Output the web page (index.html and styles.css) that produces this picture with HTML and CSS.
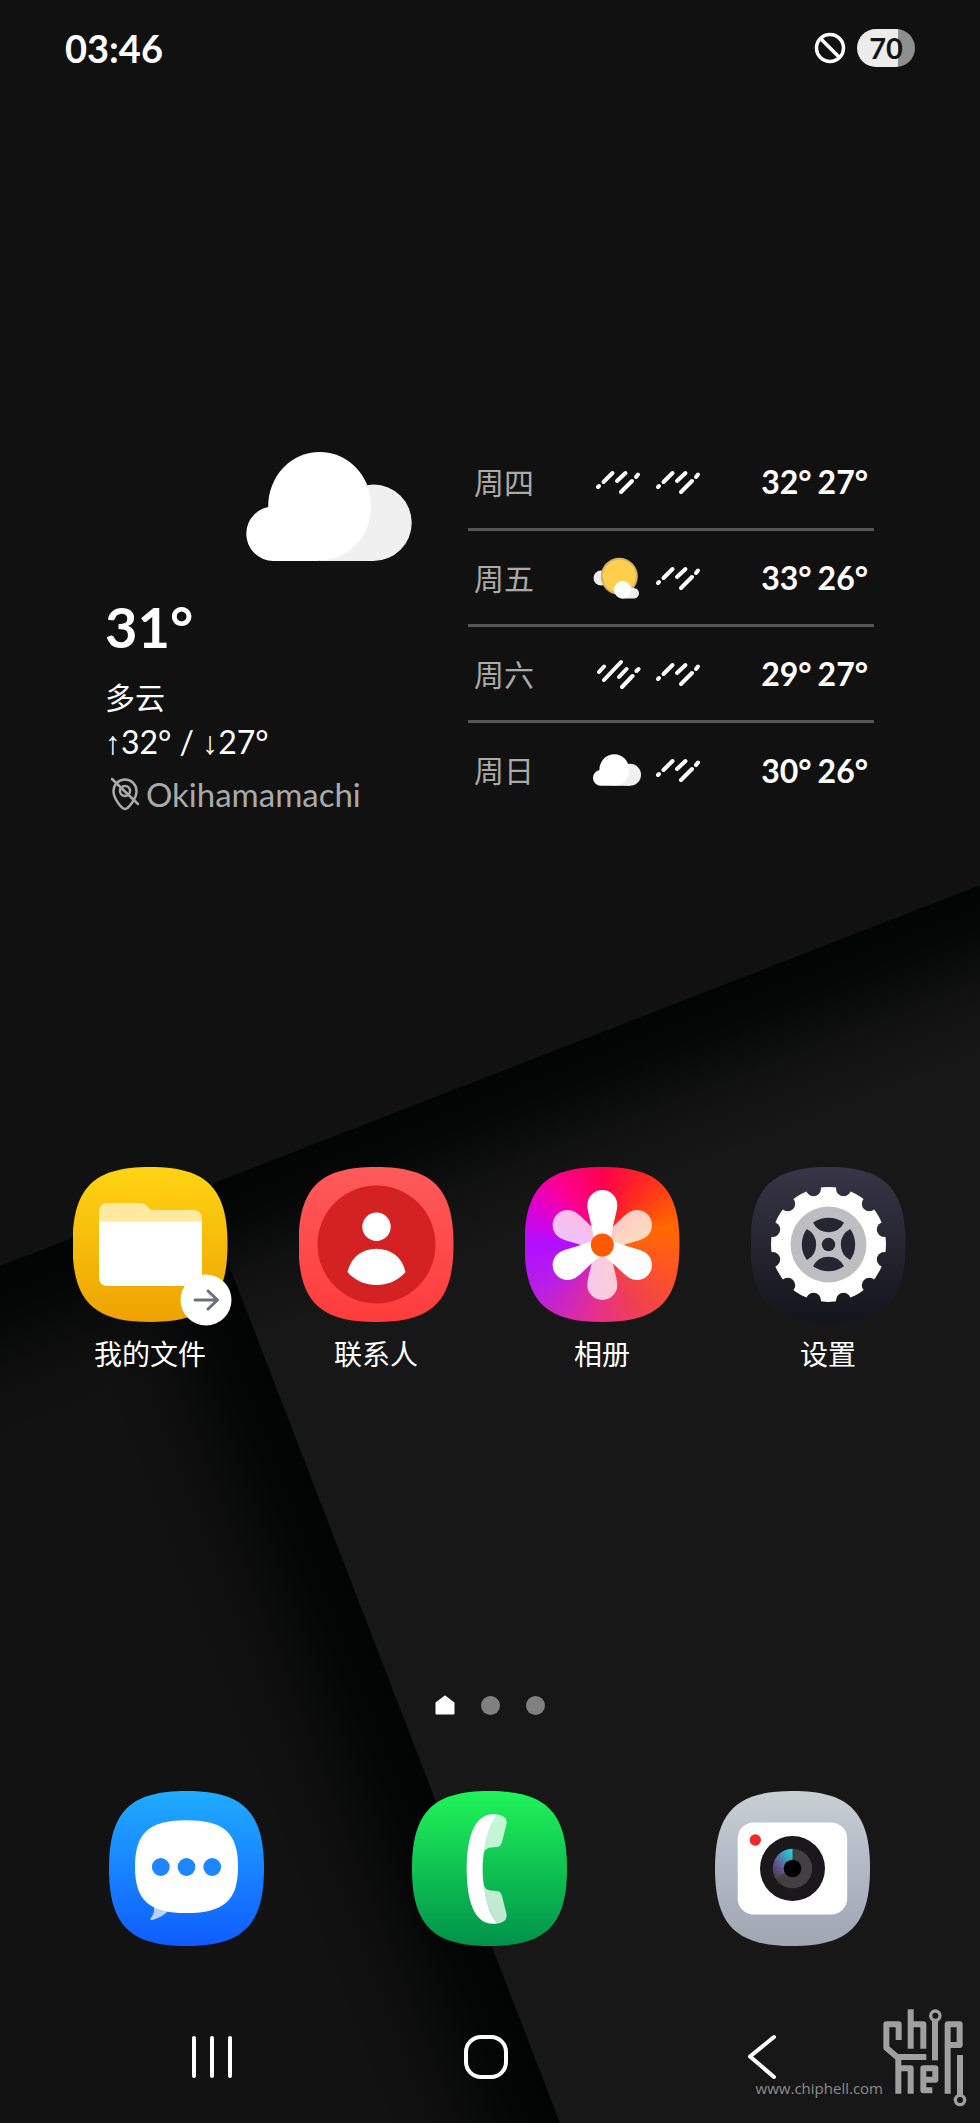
FILE: index.html
```html
<!DOCTYPE html>
<html lang="zh-CN">
<head>
    <meta charset="UTF-8">
    <meta name="viewport" content="width=device-width, initial-scale=1.0">
    <title>主屏幕</title>
    <link rel="stylesheet" href="styles.css">
</head>
<body>
    <!-- wallpaper -->
    <svg class="wallpaper" viewBox="0 0 980 2123" preserveAspectRatio="xMidYMid slice" aria-hidden="true">
        <defs>
            <linearGradient id="shadeTop" gradientUnits="userSpaceOnUse" x1="0" y1="1266" x2="58" y2="1415">
                <stop offset="0" stop-color="#020303"/>
                <stop offset=".25" stop-color="#020303" stop-opacity=".85"/>
                <stop offset=".6" stop-color="#020303" stop-opacity=".3"/>
                <stop offset="1" stop-color="#020303" stop-opacity="0"/>
            </linearGradient>
            <linearGradient id="shadeSide" gradientUnits="userSpaceOnUse" x1="228" y1="1262" x2="79" y2="1319">
                <stop offset="0" stop-color="#020303"/>
                <stop offset=".25" stop-color="#020303" stop-opacity=".85"/>
                <stop offset=".6" stop-color="#020303" stop-opacity=".3"/>
                <stop offset="1" stop-color="#020303" stop-opacity="0"/>
            </linearGradient>
        </defs>
        <rect width="980" height="2123" fill="#171717"/>
        <path d="M0 1200L198 1185 560 2123H0Z" fill="#121212"/>
        <path d="M0 1200L198 1185 560 2123H0Z" fill="url(#shadeSide)"/>
        <path d="M0 1266L980 885V1300L0 1600Z" fill="url(#shadeTop)"/>
        <path d="M0 0H980V885L0 1266Z" fill="#111"/>
    </svg>

    <!-- shared weather icons -->
    <svg class="defs" aria-hidden="true">
        <symbol id="cloud" viewBox="0 0 498 328">
            <circle cx="383" cy="213" r="115" fill="#f0f0f0"/>
            <rect x="221" y="213" width="162" height="115" fill="#f0f0f0"/>
            <ellipse cx="221" cy="163" rx="155" ry="163" fill="#fff"/>
            <path d="M221 328H82a82 82 0 0 1 0-164h139z" fill="#fff"/>
        </symbol>
        <symbol id="rain" viewBox="0 0 48 42">
            <path d="M5 26l1-1M10.500 21l9-9M24 20l8.500-8M28 31l11-11M43 16l2-2.500" fill="none" stroke="#fff" stroke-width="4" stroke-linecap="round"/>
        </symbol>
        <symbol id="heavy" viewBox="0 0 48 42">
            <path d="M6 19l5-5.500M11 27L28 9M26 24l7.500-8M29 34l10.500-11M43.500 18l2-2" fill="none" stroke="#fff" stroke-width="4" stroke-linecap="round"/>
        </symbol>
        <symbol id="sunny" viewBox="0 0 48 42">
            <circle cx="8" cy="21" r="7.500" fill="#eee"/>
            <circle cx="26.300" cy="19.300" r="18.500" fill="#d4b468"/>
            <circle cx="26.300" cy="19.300" r="16.500" fill="#ffcf4d"/>
            <rect x="25" y="31" width="21" height="10.500" rx="5.200" fill="#eee"/>
            <circle cx="29.700" cy="32.800" r="8.700" fill="#fff"/>
        </symbol>
    </svg>

    <header class="status-bar">
        <time>03:46</time>
        <div class="status-icons">
            <svg width="32" height="32" viewBox="0 0 32 32" fill="none" stroke="#fff" stroke-width="3.500">
                <circle cx="16" cy="16" r="13.500"/>
                <path d="M6.500 6.500l19 19"/>
            </svg>
            <span class="battery">70</span>
        </div>
    </header>

    <main>
        <section class="weather">
            <div class="now">
                <svg class="now-icon"><use href="#cloud"/></svg>
                <p class="temp">31°</p>
                <p class="cond">多云</p>
                <p class="range"><span class="arrow">↑</span>32° / <span class="arrow">↓</span>27°</p>
                <p class="place">
                    <svg width="30" height="34" viewBox="0 0 30 34" fill="none" stroke="#aaa" stroke-width="2.500" stroke-linecap="round">
                        <path d="M15 32C12 32 3.500 22 3.500 14a11.500 11.500 0 0 1 23 0C26.500 22 18 32 15 32Z"/>
                        <circle cx="15" cy="14" r="5"/>
                        <path d="M2 2l26 25"/>
                    </svg>
                    Okihamamachi
                </p>
            </div>
            <table class="forecast">
                <tr>
                    <th scope="row">周四</th>
                    <td class="sky"><svg><use href="#rain"/></svg><svg><use href="#rain"/></svg></td>
                    <td class="deg"><span>32°</span><span>27°</span></td>
                </tr>
                <tr>
                    <th scope="row">周五</th>
                    <td class="sky"><svg><use href="#sunny"/></svg><svg><use href="#rain"/></svg></td>
                    <td class="deg"><span>33°</span><span>26°</span></td>
                </tr>
                <tr>
                    <th scope="row">周六</th>
                    <td class="sky"><svg><use href="#heavy"/></svg><svg><use href="#rain"/></svg></td>
                    <td class="deg"><span>29°</span><span>27°</span></td>
                </tr>
                <tr>
                    <th scope="row">周日</th>
                    <td class="sky"><svg><use href="#cloud"/></svg><svg><use href="#rain"/></svg></td>
                    <td class="deg"><span>30°</span><span>26°</span></td>
                </tr>
            </table>
        </section>

        <nav class="apps">
            <a href="#files" class="app">
                <span class="app-icon">
                    <svg class="tile files" viewBox="0 0 155 155">
                        <path d="M26 60V45q0-9 9-9h32q4 0 6 2l5 5h42q9 0 9 9v8z" fill="#ffe8a0"/>
                        <path d="M26 54.500h103V110q0 9-9 9H35q-9 0-9-9z" fill="#fff"/>
                    </svg>
                    <svg class="badge" viewBox="0 0 52 52">
                        <circle cx="26" cy="26" r="25.500" fill="#fff"/>
                        <path d="M15 26h22M28 17l9.500 9-9.500 9" fill="none" stroke="#6b6f78" stroke-width="3" stroke-linecap="round" stroke-linejoin="round"/>
                    </svg>
                </span>
                <span>我的文件</span>
            </a>
            <a href="#contacts" class="app">
                <svg class="tile contacts" viewBox="0 0 155 155">
                    <circle cx="77.500" cy="77.500" r="59" fill="#d42222"/>
                    <circle cx="77.500" cy="59.700" r="14.200" fill="#fff"/>
                    <path d="M48.500 105C52 90 63 81.700 77.500 81.700S103 90 106.500 105C99 114 88 118 77.500 118S56 114 48.500 105Z" fill="#fff"/>
                </svg>
                <span>联系人</span>
            </a>
            <a href="#gallery" class="app">
                <svg class="tile gallery" viewBox="0 0 155 155">
                    <defs>
                        <path id="petal" d="M-15-40A15 15 0 0 1 15-40C15-33 10-20 9-8L0 0-9-8C-10-20-15-33-15-40Z"/>
                    </defs>
                    <g transform="translate(77.300 78)" fill="#fff">
                        <g opacity=".75">
                            <use href="#petal" transform="rotate(60)"/>
                            <use href="#petal" transform="rotate(180)"/>
                            <use href="#petal" transform="rotate(300)"/>
                        </g>
                        <use href="#petal"/>
                        <use href="#petal" transform="rotate(120)"/>
                        <use href="#petal" transform="rotate(240)"/>
                        <circle r="11.500" fill="#ff5a00"/>
                    </g>
                </svg>
                <span>相册</span>
            </a>
            <a href="#settings" class="app">
                <svg class="tile settings" viewBox="0 0 155 155">
                    <defs>
                        <g id="notches">
                            <circle cx="55.800" cy="15" r="7.500"/>
                            <circle cx="40.800" cy="40.800" r="7.500"/>
                            <circle cx="15" cy="55.800" r="7.500"/>
                        </g>
                        <mask id="teeth">
                            <rect x="-60" y="-60" width="120" height="120" fill="#fff"/>
                            <g fill="#000">
                                <use href="#notches"/>
                                <use href="#notches" transform="rotate(90)"/>
                                <use href="#notches" transform="rotate(180)"/>
                                <use href="#notches" transform="rotate(270)"/>
                            </g>
                        </mask>
                        <path id="spoke" d="M-15.500-21.700A26.600 26.600 0 0 1 15.500-21.700A17.500 17.500 0 0 1-15.500-21.700Z"/>
                    </defs>
                    <g transform="translate(77.500 77.500)" fill="#262633">
                        <circle r="57.500" fill="#fff" mask="url(#teeth)"/>
                        <circle r="38" fill="#bebec2"/>
                        <use href="#spoke"/>
                        <use href="#spoke" transform="rotate(90)"/>
                        <use href="#spoke" transform="rotate(180)"/>
                        <use href="#spoke" transform="rotate(270)"/>
                        <circle r="6.700"/>
                    </g>
                </svg>
                <span>设置</span>
            </a>
        </nav>
    </main>

    <div class="pages">
        <svg width="20" height="20" viewBox="0 0 20 20"><path d="M10 1.500L18.500 8v10.500h-17V8z" fill="#fff" stroke="#fff" stroke-width="2" stroke-linejoin="round"/></svg>
        <i></i>
        <i></i>
    </div>

    <nav class="dock">
        <a href="#messages" aria-label="信息">
            <svg class="tile messages" viewBox="0 0 155 155">
                <path d="M45 113q1 10-3.500 14.500-.5 2 2 1.500Q54 126 60 119z" fill="#b8d2ff"/>
                <path d="M77.500 29.300C115 29.300 129 42 129 75.700S115 122 77.500 122 26 109.400 26 75.700 40 29.300 77.500 29.300Z" fill="#fff"/>
                <g fill="#1e86ff">
                    <circle cx="51.800" cy="76" r="8.900"/>
                    <circle cx="77.500" cy="76" r="8.900"/>
                    <circle cx="103.200" cy="76" r="8.900"/>
                </g>
            </svg>
        </a>
        <a href="#phone" aria-label="电话">
            <svg class="tile phone" viewBox="0 0 155 155">
                <defs>
                    <path id="ear" d="M83 23.300C91 23.500 95.500 27 94.500 33L90 51Q89 55.500 85 56L79 56.500Q73 57 72 62C73 46 78 34 85 23.500Z"/>
                </defs>
                <use href="#ear" fill="#fff" opacity=".75"/>
                <use href="#ear" fill="#fff" opacity=".75" transform="matrix(1 0 0 -1 0 156)"/>
                <path d="M85 23.500C63 20 54.700 45 54.700 78S63 136 85 132.500C78 122 74 112 72.500 98 70 85 70 71 72.500 58 74 46 78 34 85 23.500Z" fill="#fff"/>
            </svg>
        </a>
        <a href="#camera" aria-label="相机">
            <svg class="tile camera" viewBox="0 0 155 155">
                <defs>
                    <linearGradient id="glint" x1=".9" y1="0" x2=".1" y2="1">
                        <stop offset="0" stop-color="#22cfdc"/>
                        <stop offset=".3" stop-color="#3e9fb8"/>
                        <stop offset=".65" stop-color="#66508f"/>
                        <stop offset="1" stop-color="#424042"/>
                    </linearGradient>
                </defs>
                <rect x="22.700" y="31.500" width="109.500" height="92" rx="16" fill="#fff"/>
                <circle cx="40.300" cy="49" r="5.700" fill="#f02828"/>
                <circle cx="77.500" cy="77.500" r="32.500" fill="#1a181a"/>
                <circle cx="77.500" cy="77.500" r="19.700" fill="#424042"/>
                <path d="M77.500 57.800A19.700 19.700 0 0 0 60.500 87.300L77.500 77.500Z" fill="url(#glint)"/>
                <circle cx="77.500" cy="77.500" r="8.800"/>
            </svg>
        </a>
    </nav>

    <footer class="nav-bar">
        <button type="button" aria-label="最近">
            <svg viewBox="0 0 48 48"><path d="M6 5v38M24 5v38M42 5v38"/></svg>
        </button>
        <button type="button" aria-label="主页">
            <svg viewBox="0 0 48 48"><rect x="4" y="4" width="40" height="40" rx="15"/></svg>
        </button>
        <button type="button" aria-label="返回">
            <svg viewBox="0 0 48 48"><path d="M37 4L13 23.500 37 44"/></svg>
        </button>
    </footer>

    <div class="watermark">
        <a href="#chiphell">www.chiphell.com</a>
        <svg width="84" height="98" viewBox="428 44 252 294" fill="none" stroke="#a0a0a0" stroke-width="18" stroke-linejoin="round">
            <path d="M475 137V90H438V160L470 188H558"/>
            <path d="M511 45V163M511 90H549V163"/>
            <path d="M584 80V198"/>
            <circle cx="585" cy="64" r="14" stroke-width="10"/>
            <path d="M622 298V90H658V152H622"/>
            <path d="M474 188V298M474 222H511V298"/>
            <path d="M549 256H585V222H549V288H576"/>
            <path d="M659 182V302"/>
            <circle cx="659" cy="317" r="14" stroke-width="10"/>
        </svg>
    </div>
</body>
</html>
```
FILE: styles.css
```css
:root {
    --bg: #111;
    --text: #fff;
    --muted: #aaa;
    --tile: 155px;
}

* {
    margin: 0;
    padding: 0;
    box-sizing: border-box;
}

body {
    font-family: Lato, 'Liberation Sans', 'Noto Sans CJK SC', sans-serif;
    background: var(--bg);
    color: var(--text);
    min-height: 100vh;
    display: flex;
    flex-direction: column;
    position: relative;
    overflow-x: hidden;
}

a {
    color: inherit;
    text-decoration: none;
}

svg {
    display: block;
}

.wallpaper {
    position: absolute;
    inset: 0;
    width: 100%;
    height: 100%;
    z-index: -1;
}

.defs {
    position: absolute;
    width: 0;
    height: 0;
}

/* status bar */
.status-bar {
    display: flex;
    justify-content: space-between;
    align-items: center;
    height: 96px;
    padding: 0 65px;
}

.status-bar time {
    font-size: 38px;
    font-weight: 700;
}

.status-icons {
    display: flex;
    align-items: center;
    gap: 11px;
}

.battery {
    width: 58px;
    height: 38px;
    border-radius: 19px;
    background: linear-gradient(90deg, #ececec 70%, #8f8f8f 70%);
    color: #151515;
    font-size: 29px;
    font-weight: 700;
    line-height: 37px;
    text-align: center;
}

/* weather widget */
.weather {
    display: grid;
    grid-template-columns: 307fr 406fr;
    gap: 56px;
    margin-top: 336px;
    padding: 0 106px 0 105px;
}

.now {
    padding-top: 20px;
}

.now-icon {
    width: 166px;
    height: 109px;
    margin: 0 0 26px auto;
}

.temp {
    font-size: 56px;
    font-weight: 700;
    line-height: 80px;
}

.cond {
    margin-top: 8px;
    font-size: 30px;
    line-height: 44px;
}

.range {
    font-size: 32px;
    line-height: 46px;
}

.arrow {
    font-family: 'Liberation Sans', sans-serif;
}

.place {
    display: flex;
    align-items: center;
    gap: 6px;
    padding-left: 5px;
    color: var(--muted);
    font-size: 33px;
    line-height: 56px;
}

.forecast {
    border-collapse: collapse;
    width: 100%;
    align-self: start;
}

.forecast tr {
    height: 96px;
    border-top: 3px solid transparent;
}

.forecast tr + tr {
    border-top-color: #555;
}

.forecast th {
    width: 125px;
    padding-left: 6px;
    color: var(--muted);
    font-size: 30px;
    font-weight: 400;
    line-height: 40px;
    text-align: left;
}

.sky svg {
    display: inline-block;
    width: 48px;
    height: 42px;
    margin-right: 12px;
    vertical-align: middle;
}

.deg {
    padding-right: 6px;
    font-size: 32px;
    font-weight: 700;
    text-align: right;
    white-space: nowrap;
}

.deg span + span {
    margin-left: 6px;
}

/* app grid */
.apps {
    display: grid;
    grid-template-columns: repeat(4, 1fr);
    margin-top: 345px;
    padding: 0 39px 0 37px;
}

.app {
    display: flex;
    flex-direction: column;
    align-items: center;
    gap: 12px;
    font-size: 28px;
    line-height: 40px;
}

.app-icon {
    position: relative;
}

.tile {
    width: var(--tile);
    height: var(--tile);
    clip-path: path('M77.5 0C134 0 155 21 155 77.5S134 155 77.5 155 0 134 0 77.5 21 0 77.5 0Z');
}

.files { background: linear-gradient(#ffd414, #eea200); }
.contacts { background: linear-gradient(#ff5a5a, #ff3c3c); }
.gallery { background: conic-gradient(#ff0050, #ff2a20 35deg, #ff6a00 75deg, #ff5522 110deg, #f04050 150deg, #e8308c 185deg, #b81ee8 235deg, #b010ff 270deg, #e000d0 300deg, #ff0090 325deg, #ff0050); }
.settings { background: linear-gradient(#383646, #14141c); }
.messages { background: linear-gradient(#20acff, #105cff); }
.phone { background: linear-gradient(#20f45a, #00924a); }
.camera { background: linear-gradient(#c8d0d3, #b0b6c4 55%, #a0a5b1); }

.badge {
    position: absolute;
    right: -4px;
    bottom: -4px;
    width: 52px;
    height: 52px;
}

/* page indicator */
.pages {
    display: flex;
    justify-content: center;
    align-items: center;
    gap: 26px;
    height: 20px;
    margin-top: auto;
}

.pages i {
    width: 19px;
    height: 19px;
    border-radius: 50%;
    background: #808080;
}

/* dock */
.dock {
    display: grid;
    grid-template-columns: repeat(3, 1fr);
    justify-items: center;
    margin-top: 76px;
    padding: 0 36px 0 35px;
}

/* navigation bar */
.nav-bar {
    display: grid;
    grid-template-columns: repeat(3, 1fr);
    height: 177px;
    padding: 45px 82px 0 75px;
}

.nav-bar button {
    display: flex;
    justify-content: center;
    align-items: center;
    height: 132px;
    border: 0;
    background: none;
    cursor: pointer;
}

.nav-bar svg {
    width: 48px;
    height: 48px;
    fill: none;
    stroke: #fff;
    stroke-width: 4;
    stroke-linecap: round;
    stroke-linejoin: round;
}

.watermark {
    position: absolute;
    right: 13px;
    bottom: 16px;
    display: flex;
    align-items: flex-end;
    color: #8c8c8c;
    font-family: 'Open Sans', sans-serif;
    font-size: 15px;
    line-height: 38px;
}
```
